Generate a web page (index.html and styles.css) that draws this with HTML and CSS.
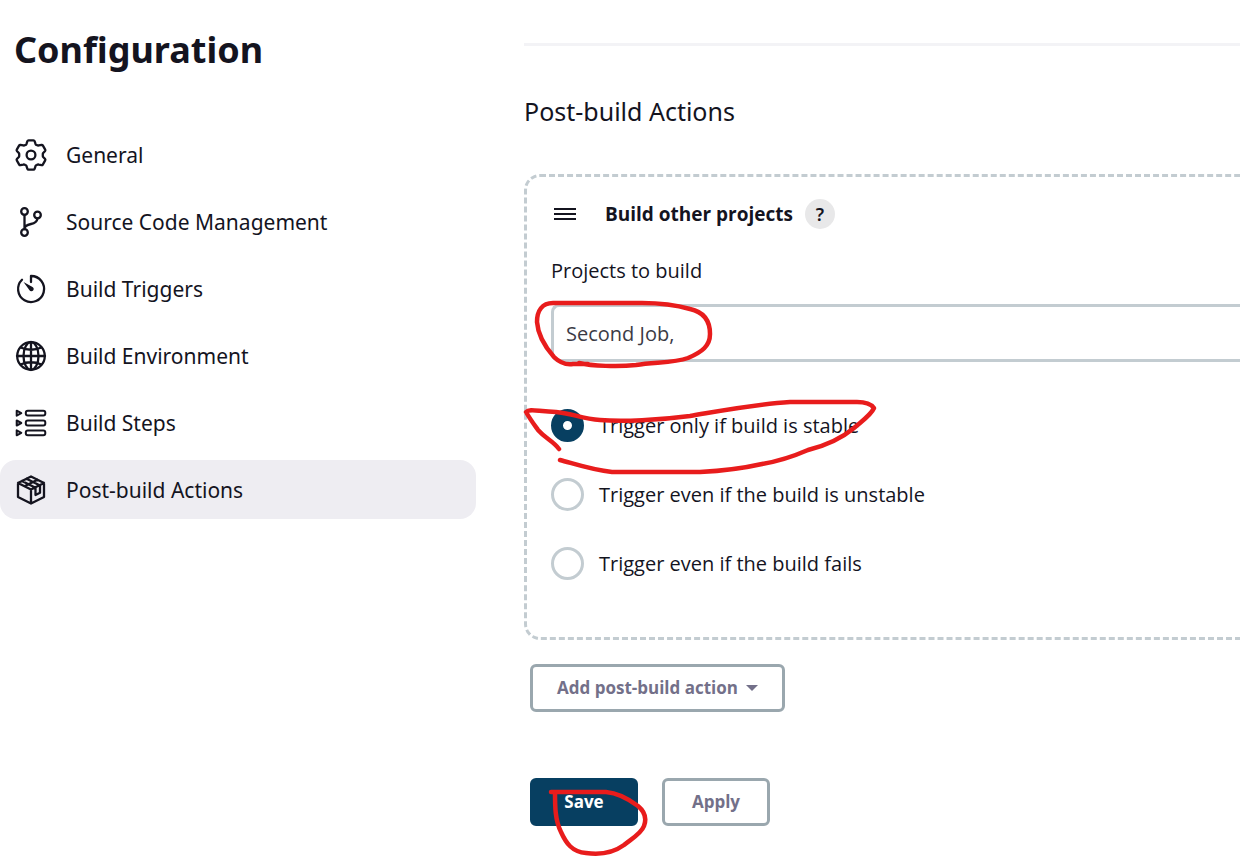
FILE: index.html
```html
<!DOCTYPE html>
<html lang="en">
<head>
<meta charset="utf-8">
<meta name="viewport" content="width=device-width, initial-scale=1">
<title>Configuration</title>
<link rel="stylesheet" href="styles.css">
</head>
<body>
<div class="page">
  <aside class="sidebar">
    <h1 class="title">Configuration</h1>
    <nav class="tasks">
      <a class="task" href="#general">
        <svg class="icon" viewBox="0 0 32 32"><path d="M13.500 1.400h5q.8 0 1.100.8l1 3q.3.600 1 .8l1 .4q.6.200 1.200 0l2.800-.6q.8-.1 1.200.6l2.400 4.200q.4.700-.1 1.300L28.200 14q-.4.500-.4 1v2q0 .5.400 1l1.900 2.100q.5.600.1 1.300l-2.400 4.200q-.4.700-1.200.6l-2.800-.6q-.6-.2-1.200 0l-1 .4q-.7.200-1 .8l-1 3q-.3.800-1.100.8h-5q-.8 0-1.100-.8l-1-3q-.3-.6-1-.8l-1-.4q-.6-.2-1.200 0l-2.800.6q-.8.100-1.200-.6L1.800 21.400q-.4-.7.100-1.300L3.800 18q.4-.5.400-1v-2q0-.5-.4-1L1.900 11.900q-.5-.6-.1-1.300L4.200 6.400q.4-.7 1.200-.6l2.800.6q.6.200 1.200 0l1-.4q.7-.2 1-.8l1-3q.3-.8 1.100-.8z"/><circle cx="16" cy="16" r="4.400"/></svg>
        <span>General</span>
      </a>
      <a class="task" href="#scm">
        <svg class="icon" viewBox="0 0 32 32"><circle cx="9.500" cy="5.500" r="3.300"/><circle cx="22.500" cy="9" r="3.300"/><circle cx="9.500" cy="26.500" r="3.300"/><path d="M9.500 8.800v14.400M22.500 12.300c-.5 4-3 5-6.500 5.700s-6.500 1.500-6.500 5"/></svg>
        <span>Source Code Management</span>
      </a>
      <a class="task" href="#triggers">
        <svg class="icon" viewBox="0 0 32 32"><path d="M16 9V3A13 13 0 1 1 7 6.700"/><path class="fill" d="M8.500 9l9 4.900a2.300 2.300 0 1 1-3 3.300z"/></svg>
        <span>Build Triggers</span>
      </a>
      <a class="task" href="#environment">
        <svg class="icon" viewBox="0 0 32 32"><circle cx="16" cy="16" r="13.800"/><ellipse cx="16" cy="16" rx="7.500" ry="13.800"/><path d="M16 2v28M2 16h28M5.500 7.500Q16 12 26.500 7.500M5.500 24.500Q16 20 26.500 24.500"/></svg>
        <span>Build Environment</span>
      </a>
      <a class="task" href="#steps">
        <svg class="icon thin" viewBox="0 0 32 32"><rect x="10.800" y="3.800" width="19.500" height="4.800" rx="2"/><rect x="10.800" y="13.600" width="19.500" height="4.800" rx="2"/><rect x="10.800" y="23.400" width="19.500" height="4.800" rx="2"/><path d="M1.700 3.700v5l4.600-2.500zM1.700 13.500v5L6.300 16zM1.700 23.300v5l4.600-2.500z"/></svg>
        <span>Build Steps</span>
      </a>
      <a class="task selected" href="#post-build" aria-current="true">
        <svg class="icon" viewBox="0 0 32 32"><path d="M16 2.500L29 9v14L16 29.500 3 23V9zM3 9l13 6.500L29 9M16 15.500v14M7 7l13.500 6.700v7.300l4.500-2.300v-7.200L11.500 4.800M9.500 12.200L22.500 5.700"/></svg>
        <span>Post-build Actions</span>
      </a>
    </nav>
  </aside>

  <main class="content">
    <hr class="divider">
    <form class="form">
      <h2 class="heading" id="post-build">Post-build Actions</h2>
      <section class="card">
        <header class="card-head">
          <svg class="grip" viewBox="0 0 24 14"><path d="M1 2h22M1 7h22M1 12h22"/></svg>
          <h3 class="card-title">Build other projects</h3>
          <button class="help" type="button" aria-label="Help">?</button>
        </header>
        <label class="label" for="projects">Projects to build</label>
        <input class="field" id="projects" type="text" value="Second Job,">
        <div class="options">
          <label class="option"><input class="radio" type="radio" name="threshold" checked>Trigger only if build is stable</label>
          <label class="option"><input class="radio" type="radio" name="threshold">Trigger even if the build is unstable</label>
          <label class="option"><input class="radio" type="radio" name="threshold">Trigger even if the build fails</label>
        </div>
      </section>
      <div class="actions">
        <button class="button" type="button">Add post-build action<svg class="caret" viewBox="0 0 12 6"><path d="M0 0h12L6 6z"/></svg></button>
      </div>
      <div class="actions submit">
        <button class="button primary" type="button">Save</button>
        <button class="button" type="button">Apply</button>
      </div>
    </form>
  </main>

  <svg class="marks" width="1240" height="857" viewBox="0 0 1240 857" aria-hidden="true">
    <path d="M579 363C592 366 618 367 636 365C656 362 674 363 688 358C702 352 710 346 710 334C710 321 704 312 690 309C676 305 662 303 642 303H553C542 303 537 311 537 322C538 336 546 348 554 357C560 363 566 365 573 364H588"/>
    <path d="M559 449C553 441 546 439 538 430C533 423 530 419 526 412C530 408 539 412 556 412C571 413 582 419 600 420C622 422 660 420 690 416C725 410 755 404 790 402H857C866 402 871 404 874 408C871 415 862 421 854 428C842 438 824 446 808 450C792 457 780 461 762 464C740 469 720 471 700 472H612C592 470 575 464 560 460"/>
    <path d="M551 792H606C618 793 630 800 638 806C644 811 647 818 644 826C641 834 631 839 624 845C613 853 600 855 586 853C572 852 566 843 561 832C555 820 555 806 555 792"/>
  </svg>
</div>
</body>
</html>
```
FILE: styles.css
```css
* {
  box-sizing: border-box;
}

body {
  margin: 0;
  background: #fff;
  color: #14141f;
  font-family: "Noto Sans", "Open Sans", sans-serif;
  font-size: 21px;
  line-height: 28px;
}

h1, h2, h3 {
  margin: 0;
}

.page {
  position: relative;
  display: grid;
  grid-template-columns: 476px minmax(0, 1fr);
  column-gap: 48px;
  min-height: 100vh;
}

.title {
  padding: 24px 14px 49px;
  font-size: 36px;
  line-height: 52px;
}

.tasks {
  display: flex;
  flex-direction: column;
  gap: 8px;
}

.task {
  display: flex;
  align-items: center;
  gap: 19px;
  min-height: 59px;
  padding: 0 15px;
  border-radius: 16px;
  color: inherit;
  text-decoration: none;
}

.selected {
  background: #eeedf2;
}

.icon {
  width: 32px;
  height: 32px;
  fill: none;
  stroke: #14141f;
  stroke-width: 2.3;
  stroke-linejoin: round;
  stroke-linecap: round;
}

.thin {
  stroke-width: 2;
}

.icon .fill {
  fill: #14141f;
  stroke: none;
}

.divider {
  height: 3px;
  margin: 43px 0 48px;
  border: 0;
  background: #f3f3f6;
}

.heading {
  margin-bottom: 46px;
  font-size: 25px;
  font-weight: 400;
  line-height: 34px;
}

.card {
  padding: 22px 0 57px 24px;
  border: 3px dashed #c3ccd1;
  border-right: 0;
  border-radius: 16px 0 0 16px;
  font-family: "Open Sans", "Noto Sans", sans-serif;
  font-size: 20px;
}

.card-head {
  display: flex;
  align-items: center;
  margin-bottom: 28px;
  padding-left: 2px;
}

.grip {
  width: 24px;
  height: 14px;
  margin-right: 28px;
  stroke: #14141f;
  stroke-width: 2;
}

.card-title {
  font-size: 19px;
  line-height: 30px;
}

.help {
  width: 30px;
  height: 30px;
  margin-left: 12px;
  padding: 0;
  border: 0;
  border-radius: 50%;
  background: #e8e8e9;
  color: inherit;
  font: 600 18px/30px "Noto Sans", sans-serif;
}

.label {
  display: block;
  margin-bottom: 19px;
}

.field {
  display: block;
  width: 100%;
  height: 58px;
  padding: 0 12px;
  border: 3px solid #c3ccd1;
  border-right: 0;
  border-radius: 8px 0 0 8px;
  color: #3b3b45;
  font: inherit;
}

.options {
  display: flex;
  flex-direction: column;
  gap: 36px;
  margin-top: 47px;
}

.option {
  display: flex;
  align-items: center;
  gap: 15px;
  height: 33px;
}

.radio {
  appearance: none;
  width: 33px;
  height: 33px;
  margin: 0;
  border: 3px solid #c3ccd1;
  border-radius: 50%;
}

.radio:checked {
  border: 12px solid #073f61;
}

.actions {
  display: flex;
  gap: 24px;
  padding: 24px 6px 0;
}

.submit {
  padding-top: 66px;
}

.button {
  display: flex;
  align-items: center;
  justify-content: center;
  min-width: 108px;
  height: 48px;
  padding: 0 24px;
  border: 3px solid #9aa7ae;
  border-radius: 6px;
  background: #fff;
  color: #737089;
  font: 700 17px/24px "Open Sans", "Noto Sans", sans-serif;
}

.primary {
  border-color: #073f61;
  background: #073f61;
  color: #fff;
}

.caret {
  width: 12px;
  height: 6px;
  margin-left: 8px;
  fill: currentColor;
}

.marks {
  position: absolute;
  top: 0;
  left: 0;
  fill: none;
  stroke: #e81c1c;
  stroke-width: 4.5;
  stroke-linecap: round;
  stroke-linejoin: round;
  pointer-events: none;
}
```
